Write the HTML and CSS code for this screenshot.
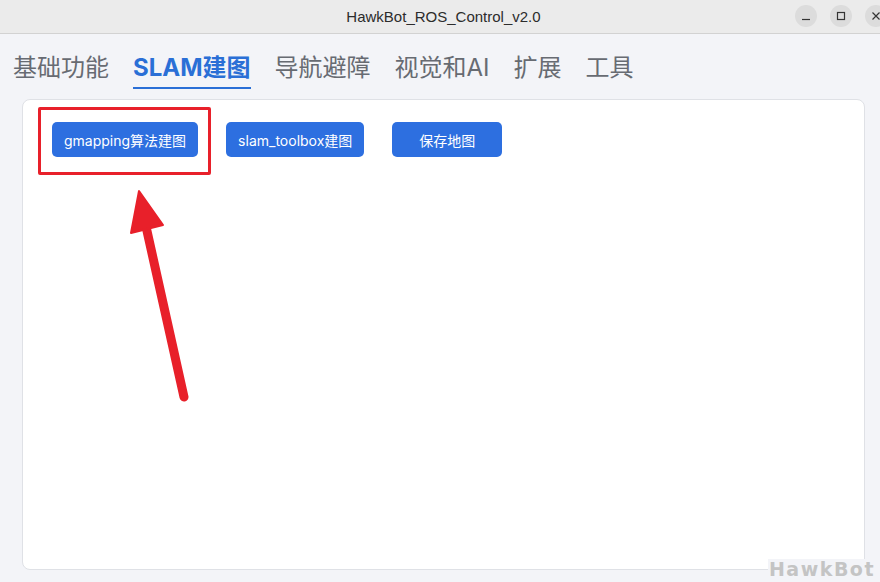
FILE: index.html
```html
<!DOCTYPE html>
<html lang="zh">
<head>
<meta charset="utf-8">
<title>HawkBot_ROS_Control_v2.0</title>
<link rel="stylesheet" href="styles.css">
</head>
<body>
<div class="window">
  <header class="titlebar">
    <div class="title">HawkBot_ROS_Control_v2.0</div>
    <div class="controls">
      <span class="ctl"><svg width="10" height="10" viewBox="0 0 10 10"><path d="M1 8.5h8" stroke="#333" stroke-width="1.2"/></svg></span>
      <span class="ctl"><svg width="10" height="10" viewBox="0 0 10 10"><rect x="1.5" y="1.5" width="7" height="7" fill="none" stroke="#333" stroke-width="1.2"/></svg></span>
      <span class="ctl"><svg width="10" height="10" viewBox="0 0 10 10"><path d="M1.5 1.5l7 7M8.5 1.5l-7 7" stroke="#333" stroke-width="1.2"/></svg></span>
    </div>
  </header>
  <nav class="tabs">
    <span class="tab">基础功能</span>
    <span class="tab active">SLAM建图</span>
    <span class="tab">导航避障</span>
    <span class="tab">视觉和AI</span>
    <span class="tab">扩展</span>
    <span class="tab">工具</span>
  </nav>
  <main class="card">
    <div class="btnrow">
      <button class="btn">gmapping算法建图</button>
      <button class="btn">slam_toolbox建图</button>
      <button class="btn wide">保存地图</button>
    </div>
  </main>
  <div class="highlight"></div>
  <svg class="arrow" width="100" height="240" viewBox="100 180 100 240">
    <path d="M184 397 L145 222" stroke="#e8202a" stroke-width="9" stroke-linecap="round" fill="none"/>
    <path d="M139 191 L131 233 L163 225 Z" fill="#e8202a" stroke="#e8202a" stroke-width="2" stroke-linejoin="round"/>
  </svg>
  <div class="watermark">HawkBot</div>
</div>
</body>
</html>
```
FILE: styles.css
```css
* { box-sizing: border-box; }
html, body { margin: 0; padding: 0; }
body {
  width: 880px;
  height: 582px;
  overflow: hidden;
  background: #f3f4f8;
  font-family: Inter, "Noto Sans CJK SC", sans-serif;
}
.window { position: relative; width: 880px; height: 582px; }
.titlebar {
  position: relative;
  height: 34px;
  padding-left: 7px;
  background: #ebebeb;
  border-bottom: 1px solid #d2d2d2;
  display: flex;
  align-items: center;
  justify-content: center;
}
.title {
  font-family: "Liberation Sans", "DejaVu Sans", sans-serif;
  font-size: 15px;
  color: #2c2c2c;
}
.controls {
  position: absolute;
  right: -7px;
  top: 5px;
  display: flex;
  gap: 13px;
}
.ctl {
  width: 22px;
  height: 22px;
  border-radius: 50%;
  background: #dcdcdc;
  display: flex;
  align-items: center;
  justify-content: center;
}
.tabs {
  display: flex;
  gap: 24px;
  padding: 18px 0 0 13px;
  height: 65px;
}
.tab {
  font-family: Inter, "Noto Sans CJK SC", sans-serif;
  font-size: 24px;
  line-height: 32px;
  color: #676b72;
  height: 37px;
}
.tab.active {
  color: #2a6fd6;
  font-weight: 700;
  border-bottom: 2px solid #2a6fd6;
}
.card {
  margin: 0 15px 0 22px;
  height: 471px;
  background: #ffffff;
  border: 1px solid #dfe1e6;
  border-radius: 8px;
  padding: 22px 29px;
}
.btnrow { display: flex; gap: 28px; }
.btn {
  height: 35px;
  padding: 0 12px;
  border: none;
  border-radius: 5px;
  background: #2d6fe0;
  color: #ffffff;
  font-family: Inter, "Noto Sans CJK SC", sans-serif;
  font-size: 14px;
}
.btn.wide { width: 110px; }
.highlight {
  position: absolute;
  left: 38px;
  top: 107px;
  width: 173px;
  height: 68px;
  border: 3px solid #e8202a;
  border-radius: 2px;
}
.arrow { position: absolute; left: 100px; top: 180px; }
.watermark {
  position: absolute;
  right: 4px;
  bottom: 3px;
  padding: 0 1px;
  background: #f3f4f8;
  font-family: "DejaVu Sans", sans-serif;
  font-weight: 700;
  font-size: 19px;
  letter-spacing: 1.5px;
  color: #c4c4c4;
  line-height: 20px;
}
```
